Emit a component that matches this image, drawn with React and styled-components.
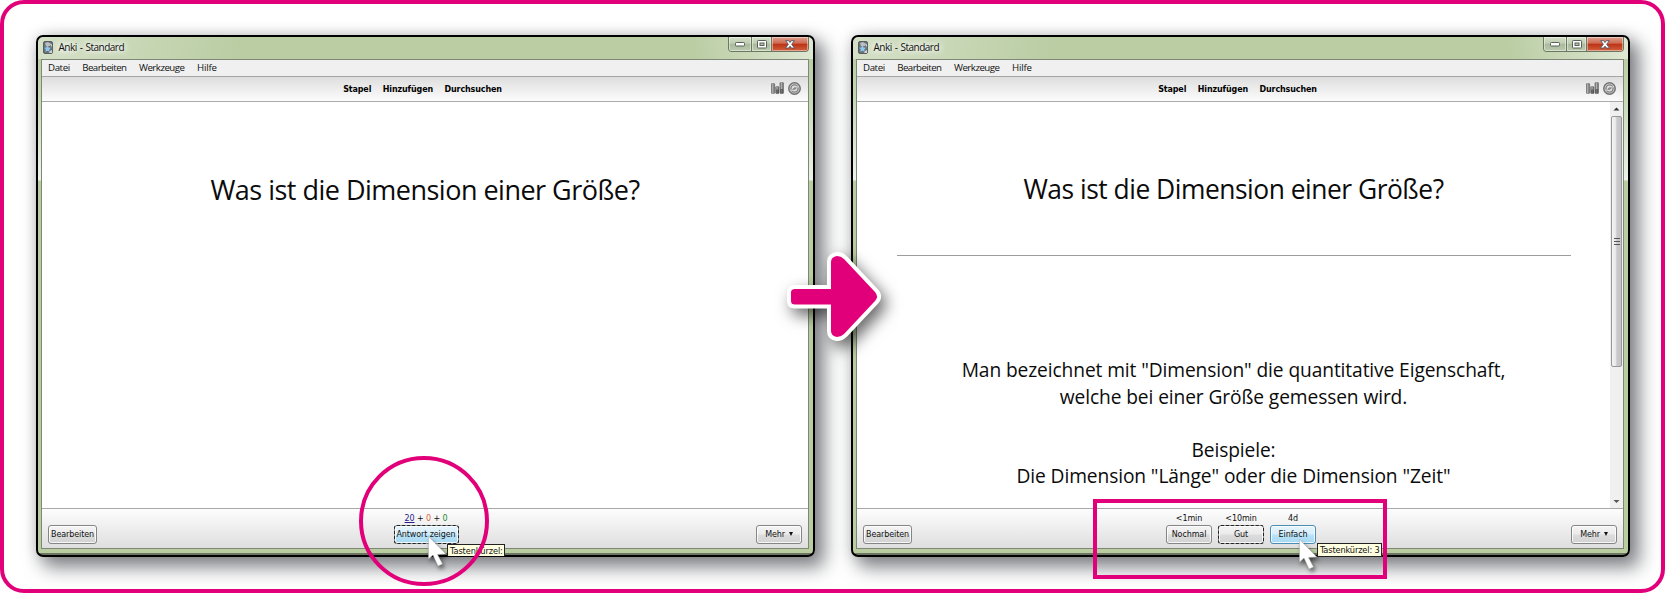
import React from 'react';
import styled, { createGlobalStyle, css } from 'styled-components';

const PINK = '#e2007a';
const UI = '"Open Sans", "Noto Sans", sans-serif';
const TAHOMA = '"DejaVu Sans Condensed", "DejaVu Sans", sans-serif';

const GlobalStyle = createGlobalStyle`
  *, *::before, *::after { box-sizing: border-box; }
  body { margin: 0; background: #fff; font-family: ${UI}; color: #111; overflow: hidden; }
`;

const Board = styled.main`
  position: relative;
  display: flex;
  gap: 36px;
  width: 1665px;
  height: 593px;
  padding: 31px 30px 0 32px;
  border: 4px solid ${PINK};
  border-radius: 24px;
  background: #fff;
  overflow: hidden;
`;

const Win = styled.section`
  position: relative;
  flex: none;
  display: flex;
  flex-direction: column;
  width: 779px;
  height: 522px;
  padding: 0 4px 6px 3px;
  border: 2px solid #000;
  border-radius: 7px;
  background:
    linear-gradient(#fff0 calc(100% - 2px), #6c7464 0) ,
    linear-gradient(100deg, #fff6 0, #fff0 200px) 0 0 / 100% 22px no-repeat,
    linear-gradient(260deg, #fff8 0, #fff0 120px) 0 0 / 100% 22px no-repeat,
    linear-gradient(#bacda3 22px, #c5d8b4 60px, #eef2e9 143px, #b9cda1 144px);
  box-shadow: 8px 9px 18px 2px rgba(20, 24, 32, 0.5), 0 0 14px rgba(0, 0, 0, 0.14);
`;

const TitleBar = styled.header`
  display: flex;
  align-items: flex-start;
  flex: none;
  height: 22px;
  padding-left: 2px;
`;

const AppIcon = styled.svg`
  flex: none;
  width: 10px;
  height: 13px;
  margin-top: 4px;
`;

const Title = styled.h1`
  flex: 1;
  margin: 2px 0 0 5.5px;
  font-size: 10px;
  line-height: 16px;
  font-weight: 400;
  letter-spacing: -0.5px;
  word-spacing: 0.9px;
  text-shadow: 0 0 5px #fff, 0 0 8px #fff, 0 0 8px #fff;
`;

const Controls = styled.div`
  display: flex;
  height: 15px;
  width: 81px;
  border: 1px solid #6c7761;
  border-top: 0;
  border-radius: 0 0 4px 4px;
  overflow: hidden;
`;

const Control = styled.span`
  display: flex;
  align-items: center;
  justify-content: center;
  width: ${p => p.$w}px;
  border-left: ${p => (p.$first ? 0 : 1)}px solid #6c7761;
  box-shadow: inset 0 0 0 1px #ffffff70;
  background: ${p => p.$close
    ? 'linear-gradient(#dca08e, #cf6a50 45%, #bb3214 50%, #d2603e)'
    : 'linear-gradient(#d3dec7, #c0cdb2 45%, #a9b99a 50%, #bccbae)'};
`;

const Client = styled.div`
  display: flex;
  flex: 1;
  flex-direction: column;
  min-height: 0;
  border: 1px solid #7f8779;
  background: #fff;
`;

const MenuBar = styled.nav`
  display: flex;
  flex: none;
  align-items: center;
  gap: 12.5px;
  height: 17px;
  padding: 0 0 0 6px;
  border-bottom: 1px solid #a5a5a5;
  background: #f0f0f0;
  font-size: 9.7px;
  line-height: 14px;
`;

const MenuItem = styled.span`
  letter-spacing: ${p => p.$ls || 0}px;
  white-space: nowrap;
`;

const ToolBar = styled.div`
  position: relative;
  display: flex;
  flex: none;
  align-items: center;
  justify-content: center;
  gap: 11.5px;
  height: 25px;
  padding-right: 5px;
  border-bottom: 1px solid #aaa;
  background: linear-gradient(#dedede, #fcfcfc);
  font: bold 8.9px/14px ${TAHOMA};
  letter-spacing: -0.12px;
  color: #000;
`;

const ToolIcons = styled.div`
  position: absolute;
  right: 7px;
  top: 5px;
  display: flex;
  gap: 4px;
`;

const Body = styled.div`
  display: flex;
  flex: 1;
  min-height: 0;
`;

const Card = styled.article`
  flex: 1;
  text-align: center;
  color: #0b0b0b;
  white-space: nowrap;
`;

const Question = styled.h2`
  margin: ${p => p.$top}px 0 0;
  font-size: ${p => p.$size}px;
  line-height: 40px;
  font-weight: 400;
  letter-spacing: ${p => p.$ls}px;
`;

const Rule = styled.hr`
  width: 674px;
  height: 1px;
  margin: 46px auto 0;
  border: 0;
  background: #9c9c9c;
`;

const Answer = styled.div`
  margin-top: 101px;
  font-size: 19.2px;
  line-height: 26.5px;
  letter-spacing: -0.11px;
`;

const Line = styled.p`
  margin: 0;
  height: 26.5px;
`;

const ScrollBar = styled.div`
  display: flex;
  flex-direction: column;
  align-items: center;
  flex: none;
  width: 13px;
  background: #f0f0f0;
`;

const ScrollArrow = styled.svg`
  flex: none;
  width: 13px;
  height: 14px;
`;

const Thumb = styled.div`
  display: flex;
  align-items: center;
  justify-content: center;
  width: 11px;
  height: 251px;
  border: 1px solid #979797;
  border-radius: 2px;
  background: linear-gradient(90deg, #f5f5f5, #e8e8e9 40%, #c9c9cd 55%, #c4c4c9);
`;

const Spacer = styled.div`
  flex: 1;
`;

const BottomBar = styled.footer`
  display: grid;
  grid-template-columns: 1fr auto 1fr;
  flex: none;
  height: 40px;
  padding: 0 6px;
  border-top: 1px solid #a8a8a8;
  background: linear-gradient(#fdfdfd, #dedede);
  font: 8.9px/12px ${TAHOMA};
`;

const Side = styled.div`
  display: flex;
  justify-content: ${p => (p.$end ? 'flex-end' : 'flex-start')};
  padding-top: 16px;
`;

const Choices = styled.div`
  display: flex;
  gap: 6px;
  padding-left: 2px;
`;

const Choice = styled.div`
  display: flex;
  flex-direction: column;
  align-items: center;
  gap: 1px;
  padding-top: 3px;
  letter-spacing: -0.1px;
`;

const Count = styled.span`
  color: ${p => p.$color};
  text-decoration: ${p => (p.$current ? 'underline' : 'none')};
`;

const Button = styled.button`
  flex: none;
  width: ${p => p.$w}px;
  height: 19px;
  padding: 0;
  border: 1px solid #858585;
  border-radius: 3px;
  background: linear-gradient(#f4f4f4, #ebebeb 48%, #dddddd 52%, #d2d2d2);
  box-shadow: inset 0 0 0 1px #fffc;
  font: 8.9px/15px ${TAHOMA};
  letter-spacing: ${p => p.$ls ?? -0.1}px;
  color: #111;
  white-space: nowrap;
  ${p => p.$hot && css`
    border-color: #4b8db5;
    background: linear-gradient(#e8f5fc, #d6eefb 48%, #b9e3f8 52%, #a6d8f2);
  `}
  ${p => p.$focus && css`
    outline: 1px dashed #222;
    outline-offset: -1px;
    border-color: #8a8f94;
  `}
`;

const Caret = styled.span`
  display: inline-block;
  margin-left: 4px;
  border: 2px solid transparent;
  border-top: 4px solid #111;
  border-bottom: 0;
  vertical-align: 1.5px;
`;

const Tooltip = styled.div`
  position: absolute;
  left: ${p => p.$x}px;
  top: ${p => p.$y}px;
  width: ${p => p.$w}px;
  height: ${p => p.$h}px;
  padding-left: 2px;
  border: 1px solid #222;
  border-bottom-width: ${p => (p.$cut ? 0 : 1)}px;
  background: #ffffe1;
  font: 9.2px/12px ${TAHOMA};
  letter-spacing: ${p => p.$ls}px;
  overflow: hidden;
  white-space: nowrap;
`;

const Pointer = styled.svg`
  position: absolute;
  left: ${p => p.$x}px;
  top: ${p => p.$y}px;
  width: 26px;
  height: 38px;
  overflow: visible;
  filter: drop-shadow(2px 3px 2px #0008);
`;

const Highlight = styled.div`
  position: absolute;
  left: ${p => p.$x}px;
  top: ${p => p.$y}px;
  width: ${p => p.$w}px;
  height: ${p => p.$h}px;
  border: 4px solid ${PINK};
  border-radius: ${p => (p.$round ? '50%' : 0)};
`;

const Arrow = styled.svg`
  position: absolute;
  left: 776px;
  top: 236px;
  width: 110px;
  height: 110px;
  overflow: visible;
  filter: drop-shadow(5px 7px 8px #0009);
`;

function AnkiIcon() {
  return (
    <AppIcon viewBox="0 0 10 13">
      <rect x=".5" y=".5" width="9" height="12" rx="1.5" fill="#6b7074" stroke="#585e62" />
      <path d="M2 2l3-1 3 2-1 2-4 .5z" fill="#b9bec1" />
      <path d="M4.5 4.5l1.1 2 2.4.2-1.7 1.7.3 2.4-2.1-1.1-2.2 1 .5-2.4L1 6.7l2.4-.2z" fill="#8cc9f0" />
      <path d="M7 2.5l2 1v3zM7 10l2-1v3H6z" fill="#d0d4d6" />
    </AppIcon>
  );
}

function StatsIcon() {
  return (
    <svg width="13" height="12" viewBox="0 0 13 12">
      <defs>
        <linearGradient id="bar" x1="0" x2="1">
          <stop offset="0" stopColor="#666" />
          <stop offset=".4" stopColor="#b4b4b4" />
          <stop offset="1" stopColor="#555" />
        </linearGradient>
      </defs>
      <g fill="url(#bar)" stroke="#666" strokeWidth=".5">
        <rect x=".3" y="1.5" width="3.4" height="10" rx=".8" />
        <rect x="4.6" y="4.5" width="3.3" height="7" rx=".8" />
        <rect x="8.9" y=".4" width="3.6" height="11.2" rx=".8" />
      </g>
      <path d="M5 7.5h3v4H5zM9.2 7h3v4.5h-3z" fill="#444" opacity=".6" />
    </svg>
  );
}

function SyncIcon() {
  return (
    <svg width="13" height="13" viewBox="0 0 13 13" fill="none">
      <circle cx="6.5" cy="6.5" r="5.7" fill="#dedede" stroke="#717171" strokeWidth="1.5" />
      <circle cx="6.5" cy="6.5" r="3.6" stroke="#808080" strokeWidth="1.4" />
      <path d="M4.5 7.5h1.9V5.6zM8.6 5.7H6.8v1.8z" fill="#777" stroke="#888" strokeWidth=".6" />
      <path d="M2.6 8.1h1.6M10.4 4.9H8.8" stroke="#e4e4e4" strokeWidth="1" />
    </svg>
  );
}

function WindowControls() {
  return (
    <Controls>
      <Control $w={22} $first>
        <svg width="10" height="5"><rect x=".5" y=".5" width="9" height="3.5" rx=".8" fill="#fff" stroke="#59615a" /></svg>
      </Control>
      <Control $w={21}>
        <svg width="10" height="9">
          <rect x=".5" y=".5" width="9" height="7.5" rx=".8" fill="#fff" stroke="#59615a" />
          <rect x="3" y="3" width="4" height="2.5" fill="#b9c7ab" stroke="#59615a" />
        </svg>
      </Control>
      <Control $w={37} $close>
        <svg width="10" height="9" viewBox="0 0 10 9">
          <path d="M.7.7h3L5 2.5 6.3.7h3L6.7 4.3l2.8 3.8h-3L5 6.2 3.5 8.1h-3l2.8-3.8z" fill="#fff" stroke="#505560" strokeWidth=".9" />
        </svg>
      </Control>
    </Controls>
  );
}

function AnkiWindow({ children, scroll, choices }) {
  return (
    <Win>
      <TitleBar>
        <AnkiIcon />
        <Title>Anki - Standard</Title>
        <WindowControls />
      </TitleBar>
      <Client>
        <MenuBar>
          <MenuItem $ls={-0.4}>Datei</MenuItem>
          <MenuItem $ls={-0.55}>Bearbeiten</MenuItem>
          <MenuItem $ls={-0.5}>Werkzeuge</MenuItem>
          <MenuItem $ls={-0.2}>Hilfe</MenuItem>
        </MenuBar>
        <ToolBar>
          <span>Stapel</span>
          <span>Hinzufügen</span>
          <span>Durchsuchen</span>
          <ToolIcons><StatsIcon /><SyncIcon /></ToolIcons>
        </ToolBar>
        <Body>
          <Card>{children}</Card>
          {scroll && (
            <ScrollBar>
              <ScrollArrow viewBox="0 0 13 14"><path d="M3.5 8.5L6.5 5.5l3 3z" fill="#333" /></ScrollArrow>
              <Thumb>
                <svg width="6" height="7"><path d="M0 .5h6M0 3.5h6M0 6.5h6" stroke="#555" /></svg>
              </Thumb>
              <Spacer />
              <ScrollArrow viewBox="0 0 13 14"><path d="M3.5 6L6.5 9l3-3z" fill="#555" /></ScrollArrow>
            </ScrollBar>
          )}
        </Body>
        <BottomBar>
          <Side><Button $w={49}>Bearbeiten</Button></Side>
          <Choices>{choices}</Choices>
          <Side $end><Button $w={46}>Mehr<Caret /></Button></Side>
        </BottomBar>
      </Client>
    </Win>
  );
}

function Cursor({ x, y }) {
  return (
    <Pointer $x={x} $y={y} viewBox="0 0 26 38">
      <path d="M.5.5v22.5l4.5-4 5 11 4.5-2-5-9.5 8.3-.5z" fill="#fff" stroke="#aaa" strokeWidth=".5" />
    </Pointer>
  );
}

export default function App() {
  return (
    <>
      <GlobalStyle />
      <Board>
        <AnkiWindow
          choices={
            <Choice>
              <span><Count $color="#2a1a8a" $current>20</Count> + <Count $color="#d8663a">0</Count> + <Count $color="#1c8a2c">0</Count></span>
              <Button $w={65} $hot $focus>Antwort zeigen</Button>
            </Choice>
          }
        >
          <Question $top={68} $size={27} $ls={-0.51}>Was ist die Dimension einer Größe?</Question>
        </AnkiWindow>
        <AnkiWindow
          scroll
          choices={
            <>
              <Choice>&lt;1min<Button $w={46}>Nochmal</Button></Choice>
              <Choice>&lt;10min<Button $w={46} $focus>Gut</Button></Choice>
              <Choice>4d<Button $w={46} $hot>Einfach</Button></Choice>
            </>
          }
        >
          <Question $top={67} $size={26.4} $ls={-0.48}>Was ist die Dimension einer Größe?</Question>
          <Rule />
          <Answer>
            <Line>Man bezeichnet mit "Dimension" die quantitative Eigenschaft,</Line>
            <Line>welche bei einer Größe gemessen wird.</Line>
            <Line />
            <Line>Beispiele:</Line>
            <Line>Die Dimension "Länge" oder die Dimension "Zeit"</Line>
          </Answer>
        </AnkiWindow>
        <Tooltip $x={443} $y={540} $w={58} $h={12} $cut $ls={-0.1}>Tastenkürzel:</Tooltip>
        <Tooltip $x={1313} $y={539} $w={65} $h={14} $ls={-0.16}>Tastenkürzel: 3</Tooltip>
        <Highlight $round $x={355} $y={452} $w={130} $h={130} />
        <Highlight $x={1089} $y={495} $w={294} $h={80} />
        <Cursor x={424} y={532} />
        <Cursor x={1295} y={535} />
        <Arrow viewBox="0 0 110 110">
          <path
            d="M15 49H51V22Q51 17 57 16Q61 16 64 19L95 52Q99 56.500 95 61L64 94Q61 97 57 97Q51 96 51 91V64.500H15Q11 64.500 11 61V52.500Q11 49 15 49Z"
            fill={PINK} stroke="#fff" strokeWidth="8" paintOrder="stroke" strokeLinejoin="round"
          />
        </Arrow>
      </Board>
    </>
  );
}
